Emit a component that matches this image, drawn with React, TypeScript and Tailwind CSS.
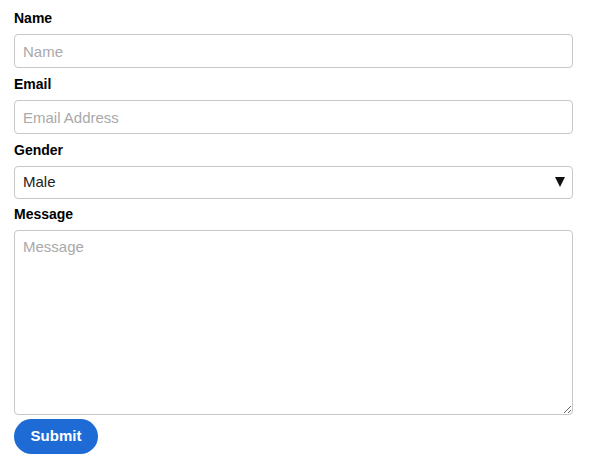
import { useState } from "react";

const font = "font-['Liberation_Sans',Arial,sans-serif]";

function Label({ children }: { children: string }) {
  return <label className="block text-[14px] leading-[20px] font-bold text-black mb-[6px]">{children}</label>;
}

const box =
  "block w-[559px] border border-[#c8c8c8] rounded-[4px] bg-white px-[8px] text-[15px] text-[#222] placeholder:text-[#a9a9a9] outline-none";

export default function App() {
  const [gender, setGender] = useState("Male");

  return (
    <div className={`${font} bg-white min-h-[472px] pl-[14px] pt-[8px]`}>
      <form className="flex flex-col" onSubmit={(e) => e.preventDefault()}>
        <Label>Name</Label>
        <input className={`${box} h-[34px]`} placeholder="Name" />

        <div className="mt-[6px]">
          <Label>Email</Label>
          <input className={`${box} h-[34px]`} placeholder="Email Address" />
        </div>

        <div className="mt-[6px]">
          <Label>Gender</Label>
          <div className="relative w-[559px]">
            <select
              value={gender}
              onChange={(e) => setGender(e.target.value)}
              className={`${box} h-[33px] appearance-none`}
            >
              <option>Male</option>
              <option>Female</option>
            </select>
            <span className="pointer-events-none absolute right-[8px] top-[11px] w-0 h-0 border-l-[5px] border-r-[5px] border-t-[10px] border-l-transparent border-r-transparent border-t-[#111]" />
          </div>
        </div>

        <div className="mt-[5px]">
          <Label>Message</Label>
          <textarea className={`${box} h-[185px] pt-[6px] leading-[20px]`} placeholder="Message" />
        </div>

        <button
          type="submit"
          className="mt-[4px] w-[84px] h-[35px] rounded-full bg-[#1e6bd6] text-white font-bold text-[15px]"
        >
          Submit
        </button>
      </form>
    </div>
  );
}
